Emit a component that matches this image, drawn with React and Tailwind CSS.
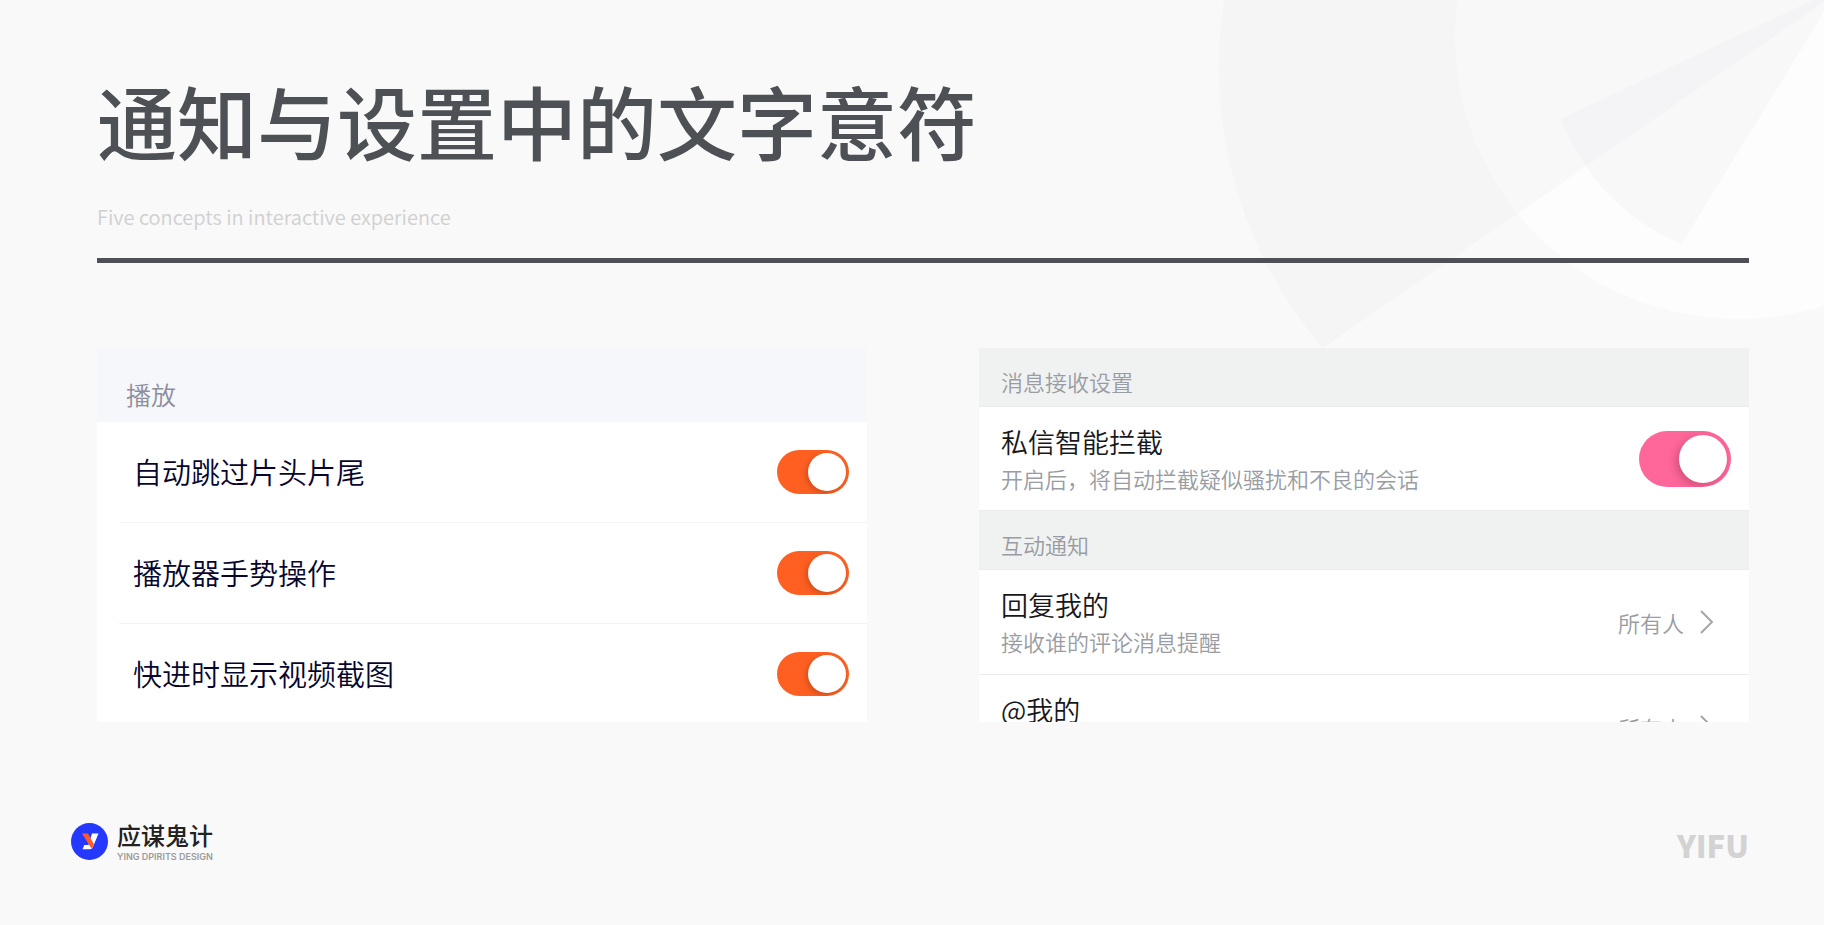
import { useState } from "react";

const PLAYBACK_OPTIONS = [
  { id: "skip-intro", label: "自动跳过片头片尾" },
  { id: "gestures", label: "播放器手势操作" },
  { id: "seek-preview", label: "快进时显示视频截图" },
];

const NOTIFY_OPTIONS = [
  { id: "reply", title: "回复我的", description: "接收谁的评论消息提醒", value: "所有人" },
  { id: "mention", title: "@我的", value: "所有人" },
];

const BackgroundShapes = () => (
  <svg
    className="absolute right-0 top-0 h-[350px] w-[624px]"
    viewBox="1200 0 624 350"
    aria-hidden="true"
  >
    <circle cx="1738" cy="36" r="283" fill="#fdfdfd" />
    <path
      d="M1224 0A434 434 0 0 0 1322.6 348L1824 2V0Z"
      fill="#e4e4e4"
      fillOpacity="0.2"
    />
    <path
      d="M1824 -5L1560.5 119A220 220 0 0 0 1681.5 244L1824 12Z"
      fill="#f8f8f8"
    />
    <path d="M1824 -5L1560.5 119A220 220 0 0 0 1586 166L1824 2Z" fill="#f4f4f7" />
  </svg>
);

const PlaybackPanel = () => {
  const [enabled, setEnabled] = useState({
    "skip-intro": true,
    gestures: true,
    "seek-preview": true,
  });

  const handleToggle = (id) => {
    setEnabled((prev) => ({ ...prev, [id]: !prev[id] }));
  };

  return (
    <section className="h-[374px] flex-1 overflow-hidden bg-white">
      <h2 className="flex h-[74px] items-end bg-[#f5f7fb] pb-[10px] pl-[29px] text-[25px] leading-[36px] font-[350] text-[#8d8d9b]">
        播放
      </h2>
      <ul className="pl-[22px]">
        {PLAYBACK_OPTIONS.map((option) => (
          <li
            key={option.id}
            className="flex h-[101px] items-center justify-between border-b border-[#f3f3f4] pl-[14px] pr-[18px]"
          >
            <label htmlFor={option.id} className="text-[29px] font-[350] text-[#08052d]">
              {option.label}
            </label>
            <input
              id={option.id}
              type="checkbox"
              role="switch"
              checked={enabled[option.id]}
              onChange={() => handleToggle(option.id)}
              className="flex h-[44px] w-[72px] appearance-none items-center overflow-hidden rounded-full bg-[#d8d8dc] px-[3px] before:size-[38px] before:rounded-full before:bg-white before:shadow-[-2px_2px_6px_rgba(0,0,0,0.2)] checked:justify-end checked:bg-[#ff6022]"
            />
          </li>
        ))}
      </ul>
    </section>
  );
};

const SectionHeader = ({ children }) => (
  <h2 className="flex h-[59px] items-end border-b border-[#eaecec] bg-[#f0f2f2] pb-[9px] pl-[22px] text-[22px] leading-[32px] font-[350] text-[#999ca3]">
    {children}
  </h2>
);

const NotificationPanel = () => {
  const [blocking, setBlocking] = useState(true);

  return (
    <section className="h-[374px] flex-1 overflow-hidden bg-white">
      <SectionHeader>消息接收设置</SectionHeader>
      <div className="flex h-[104px] items-center justify-between border-b border-[#eaecec] pl-[22px] pr-[18px]">
        <label htmlFor="blocking" className="font-[350]">
          <span className="block text-[27px] leading-[38px] text-[#17181a]">
            私信智能拦截
          </span>
          <span className="block text-[22px] leading-[34px] text-[#999ca3]">
            开启后，将自动拦截疑似骚扰和不良的会话
          </span>
        </label>
        <input
          id="blocking"
          type="checkbox"
          role="switch"
          checked={blocking}
          onChange={() => setBlocking(!blocking)}
          className="flex h-[56px] w-[92px] appearance-none items-center overflow-hidden rounded-full bg-[#d8d8dc] px-1 before:size-[48px] before:rounded-full before:bg-white before:shadow-[-3px_3px_10px_rgba(0,0,0,0.2)] checked:justify-end checked:bg-[#ff6699]"
        />
      </div>
      <SectionHeader>互动通知</SectionHeader>
      {NOTIFY_OPTIONS.map((option) => (
        <button
          key={option.id}
          type="button"
          className="flex h-[105px] w-full items-center justify-between border-b border-[#eaecec] pl-[22px] pr-[35px] text-left font-[350]"
        >
          <span className="h-[72px]">
            <span className="block text-[27px] leading-[38px] text-[#17181a]">
              {option.title}
            </span>
            {option.description && (
              <span className="block text-[22px] leading-[34px] text-[#999ca3]">
                {option.description}
              </span>
            )}
          </span>
          <span className="flex items-center gap-[15px] text-[22px] text-[#999ca3]">
            {option.value}
            <svg className="h-6 w-[15px]" viewBox="0 0 15 24" fill="none" aria-hidden="true">
              <path d="M2 1L13 12L2 23" stroke="#a6a6a6" strokeWidth="2" />
            </svg>
          </span>
        </button>
      ))}
    </section>
  );
};

const BrandLogo = () => (
  <div className="flex items-center gap-[9px]">
    <svg className="size-[37px]" viewBox="0 0 37 37" aria-hidden="true">
      <circle cx="18.5" cy="18.5" r="18.5" fill="#2438ff" />
      <path d="M21 10.5H27.5L21.8 24.3Q21 26.3 19 26.3H11.5L13.3 22H17.5Z" fill="#fff" />
      <path d="M11 10.5H17L23 21.5L21 25.5Q19.5 24.5 18.5 22.5L13.5 14.5Z" fill="#ff5a2b" />
    </svg>
    <div>
      <p className="text-2xl leading-8 font-medium text-[#222222]">应谋鬼计</p>
      <p className="font-['Inter',sans-serif] text-[9px] leading-3 font-semibold text-[#9b9b9b]">
        YING DPIRITS DESIGN
      </p>
    </div>
  </div>
);

const App = () => {
  return (
    <div className="relative min-h-screen overflow-hidden bg-[#f9f9f9] font-['Noto_Sans_CJK_SC',sans-serif]">
      <BackgroundShapes />
      <div className="relative">
        <div className="pl-[97px] pr-[75px]">
          <header className="border-b-[5px] border-[#4d5054] pt-[61px] pb-[25px]">
            <h1 className="text-[80px] leading-[116px] font-medium text-[#4d5054]">
              通知与设置中的文字意符
            </h1>
            <p className="mt-6 text-[20px] leading-[32px] font-[350] text-[#d0d0d0]">
              Five concepts in interactive experience
            </p>
          </header>
          <main className="mt-[85px] flex gap-28">
            <PlaybackPanel />
            <NotificationPanel />
          </main>
        </div>
        <footer className="mt-[93px] flex items-center justify-between pl-[71px] pr-[75px]">
          <BrandLogo />
          <span className="mt-2 text-[31px] leading-[44px] font-black text-[#d3d3d3]">YIFU</span>
        </footer>
      </div>
    </div>
  );
};

export default App;
